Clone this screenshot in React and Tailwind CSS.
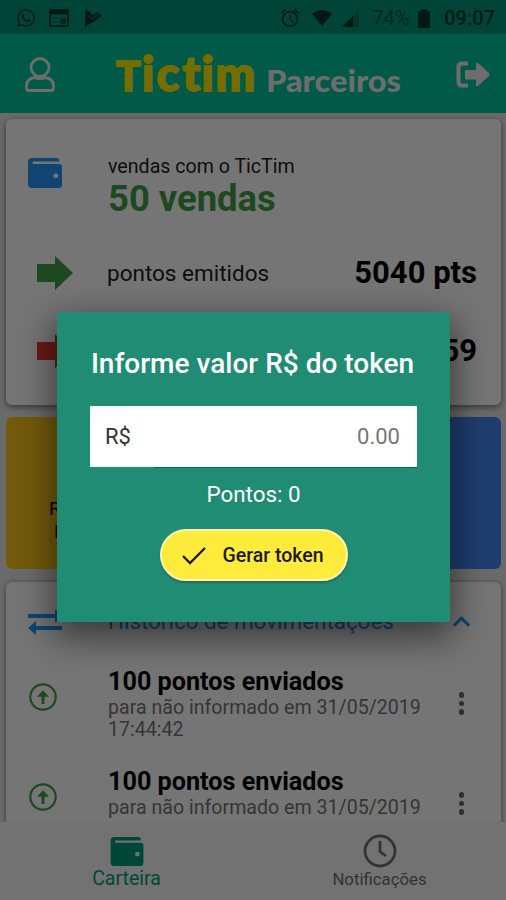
import { ChevronUp } from 'lucide-react';
import { FaWhatsapp } from 'react-icons/fa';
import { MdAlarm } from 'react-icons/md';

const movements = [
  { id: 1, title: '100 pontos enviados', detail: 'para não informado em 31/05/2019', time: '17:44:42' },
  { id: 2, title: '100 pontos enviados', detail: 'para não informado em 31/05/2019' },
];

const WalletIcon = ({ className }) => (
  <svg viewBox="0 0 34 30" className={className} fill="currentColor">
    <path
      fillRule="evenodd"
      d="M4 0H29.500Q31.500 .5 31.500 3.500H5Q3.800 4.500 5 6H31Q34 6 34 9V27Q34 30 31 30H4Q0 30 0 26V4Q0 0 4 0ZM26.500 15.500a1.500 1.500 0 0 0-1 1.500v1.500a1.500 1.500 0 0 0 1.500 1.500h1.500a1.500 1.500 0 0 0 1.500-1.500v-1.500a1.500 1.500 0 0 0-1.500-1.500Z"
    />
  </svg>
);

const ArrowIcon = ({ className }) => (
  <svg viewBox="0 0 36 34" className={className} fill="currentColor">
    <path d="M0 8H18V0L36 17L18 34V26H0Z" />
  </svg>
);

const StatusBar = () => (
  <div className="h-[34px] shrink-0 bg-[#00947a] flex items-center justify-between pl-4 pt-[2px] pr-[11px] text-[#00382e]">
    <div className="flex items-center gap-[13px]">
      <FaWhatsapp className="w-5 h-5" />
      <svg viewBox="0 0 20 18" className="w-5 h-[18px]" fill="none" stroke="currentColor" strokeWidth="1.800">
        <rect x="1" y="1" width="18" height="16" rx="1" />
        <path d="M1 3.500H19" strokeWidth="4" />
        <path d="M4 9H9M4 13H9" strokeWidth="1" opacity=".6" />
        <path d="M11 9H17V15H11Z" fill="currentColor" stroke="none" opacity=".6" />
      </svg>
      <svg viewBox="0 0 19 18" className="w-[19px] h-[18px] ml-[2px]" fill="currentColor">
        <path d="M1 0L6 3L8 6L14 3L18 7L1 18Z" />
        <path d="M5 7L8 10L15 4" fill="none" stroke="#00947a" strokeWidth="1" />
      </svg>
    </div>
    <div className="flex items-center font-['Roboto',sans-serif] text-[20px]">
      <MdAlarm className="w-[22px] h-[22px] mr-[11px]" />
      <svg viewBox="0 0 20 16" className="w-5 h-4 mr-[10px]" fill="currentColor">
        <path d="M0 4Q10 -4 20 4L10 16Z" />
      </svg>
      <svg viewBox="0 0 17 17" className="w-[17px] h-[17px] mr-[13px]" fill="currentColor">
        <path d="M0 17L17 0V17Z" opacity=".35" />
        <path d="M0 17L11 6V17Z" />
      </svg>
      <span className="w-[37px] mr-[9px] opacity-70">74%</span>
      <svg viewBox="0 0 12 19" className="w-3 h-[19px] mr-[14px]" fill="currentColor">
        <path d="M3 0H9V2H12V19H0V2H3Z" />
      </svg>
      <span className="font-medium">09:07</span>
    </div>
  </div>
);

const Header = () => (
  <header className="h-[79px] shrink-0 bg-[#00c49b] flex items-center justify-between pl-[25px] pr-4 text-[#ededed]">
    <svg viewBox="0 0 30 35" className="w-[30px] h-[35px] mt-[2px]" fill="none" stroke="currentColor" strokeWidth="2.800">
      <circle cx="15" cy="10.500" r="9" />
      <path d="M10 20.500Q1.500 21.500 1.500 29V31Q1.500 33.500 4 33.500H26Q28.500 33.500 28.500 31V29Q28.500 21.500 20 20.500Q15 23 10 20.500Z" />
    </svg>
    <svg viewBox="0 0 290 70" className="w-[290px] h-[70px] ml-2" fontFamily="Lato, sans-serif" fontWeight="900" strokeLinejoin="round">
      <text y="51.500" fill="#ffee00" stroke="#ffee00" strokeWidth="1.800">
        <tspan x="1" fontSize="41">T</tspan>
        <tspan x="27 41.500 67.500 86.500 100.500" fontSize="47">ictim</tspan>
      </text>
      <text x="151" y="52.500" fontSize="30" textLength="135" lengthAdjust="spacingAndGlyphs" fill="#ededed">
        Parceiros
      </text>
    </svg>
    <svg viewBox="0 0 34 27" className="w-[34px] h-[27px] mt-px">
      <path d="M12 2.500H6Q2.500 2.500 2.500 6V21Q2.500 24.500 6 24.500H12" fill="none" stroke="currentColor" strokeWidth="4" />
      <path d="M10 9H20V3Q20 .5 22 2L33 12Q34 13.500 33 15L22 25Q20 26 20 24V18.500H10Q9 18.500 9 17.500V10Q9 9 10 9Z" fill="currentColor" />
    </svg>
  </header>
);

const SummaryCard = () => (
  <section className="h-[286px] shrink-0 rounded-md bg-white shadow-[0_2px_6px_rgba(0,0,0,0.5)] text-black">
    <div className="flex pt-[36px] pl-[22px]">
      <WalletIcon className="w-[34px] h-[30px] mt-[3px] mr-[46px] text-[#2196f3]" />
      <div>
        <p className="text-[19.600px] leading-[23px] text-[#222222]">vendas com o TicTim</p>
        <p className="text-[36.400px] leading-[42px] font-bold text-[#43a047]">50 vendas</p>
      </div>
    </div>
    <div className="flex items-center h-[78px] mt-[14px] pl-[31px] pr-[24px]">
      <ArrowIcon className="w-9 h-[34px] mr-[34px] text-[#43a047]" />
      <span className="grow pt-[2px] text-[22.500px] text-[#222222]">pontos emitidos</span>
      <span className="text-[31px] font-bold">5040 pts</span>
    </div>
    <div className="flex items-center justify-between h-[78px] pl-[31px] pr-[24px]">
      <ArrowIcon className="w-9 h-[34px] text-[#e53935]" />
      <span className="text-[31px] font-bold">59</span>
    </div>
  </section>
);

const History = () => (
  <section className="h-[300px] shrink-0 rounded-md bg-white shadow-[0_1px_5px_rgba(0,0,0,0.5)]">
    <div className="flex items-center h-[78px] pl-[22px] pr-[26px] text-[#2196f3]">
      <svg viewBox="0 0 34 26" className="w-[34px] h-[26px] mt-[2px] mr-[46px]" fill="currentColor">
        <path d="M0 5H27V0L34 7L27 14V9H0ZM34 17H8V12L0 19L8 26V21H34Z" />
      </svg>
      <span className="grow pt-[2px] text-[22.400px]">Histórico de movimentações</span>
      <ChevronUp className="w-[27px] h-[27px]" strokeWidth={2.7} />
    </div>
    {movements.map((m) => (
      <div key={m.id} className="flex h-[100px] pl-[23px] pr-[37px]">
        <svg viewBox="0 0 28 28" className="w-7 h-7 mt-[23px] mr-[51px] text-[#43a047]" fill="none" stroke="currentColor">
          <circle cx="14" cy="14" r="12.700" strokeWidth="2.200" />
          <path d="M14 21V9" strokeWidth="3" />
          <path d="M8.500 13.500L14 7.500L19.500 13.500Z" fill="currentColor" strokeWidth=".5" />
        </svg>
        <div className="w-[330px]">
          <p className="pt-[7px] text-[25.200px] leading-[30px] font-bold text-black">{m.title}</p>
          <p className="text-[19.600px] leading-[22px] text-[#757575]">{m.detail}</p>
          {m.time && <p className="text-[19.600px] leading-[22px] text-[#757575]">{m.time}</p>}
        </div>
        <div className="ml-auto mt-[32px] flex flex-col gap-[3px]">
          <i className="w-[5.500px] h-[5.500px] rounded-full bg-[#666666]" />
          <i className="w-[5.500px] h-[5.500px] rounded-full bg-[#666666]" />
          <i className="w-[5.500px] h-[5.500px] rounded-full bg-[#666666]" />
        </div>
      </div>
    ))}
  </section>
);

const BottomNav = () => (
  <nav className="h-[78px] shrink-0 relative flex bg-[#f8f8f8]">
    <div className="w-1/2 flex flex-col items-center pt-[15px] text-[#009b78]">
      <WalletIcon className="w-[34px] h-[29px]" />
      <span className="mt-px text-[19.500px] leading-[23px]">Carteira</span>
    </div>
    <div className="w-1/2 flex flex-col items-center pt-[12px] text-[#707070]">
      <svg viewBox="0 0 34 34" className="w-[34px] h-[34px]" fill="none" stroke="currentColor" strokeWidth="2.800">
        <circle cx="17" cy="17" r="15" />
        <path d="M17 7V17.500L23 22" />
      </svg>
      <span className="text-[16.800px] leading-[22px]">Notificações</span>
    </div>
  </nav>
);

const TokenDialog = () => (
  <div className="absolute inset-0 bg-black/54">
    <div className="ml-[57px] mt-[312px] w-[393px] h-[310px] rounded-[2px] bg-[#208c73] shadow-[0_12px_34px_4px_rgba(0,0,0,0.5)] flex flex-col items-center px-[33px] text-white">
      <h2 className="mt-[36px] mr-[2px] text-[28px] leading-[32px] font-medium whitespace-nowrap">Informe valor R$ do token</h2>
      <div className="mt-[26px] w-[327px] h-[61px] shrink-0 bg-white flex items-center justify-between pl-[15px] pr-[17px] text-[22px]">
        <span className="text-[#333333]">R$</span>
        <span className="text-[#777777]">0.00</span>
      </div>
      <div className="self-end w-[263px] h-px bg-[#006b52]" />
      <p className="mt-[13px] text-[22.400px] leading-[26px]">Pontos: 0</p>
      <button className="mt-[22px] w-[188px] h-[52px] rounded-full border-2 border-[#fff7b0] bg-[#ffeb3b] shadow-[0_2px_2px_rgba(0,0,0,0.2)] flex items-center pl-[20px] text-[#1a1a1a]">
        <svg viewBox="0 0 24 18" className="w-6 h-[18px] mt-px mr-[17px]" fill="none" stroke="currentColor" strokeWidth="2.300">
          <path d="M1 9L8 16L23 1" />
        </svg>
        <span className="pt-[2px] text-[19.500px] font-medium whitespace-nowrap">Gerar token</span>
      </button>
    </div>
  </div>
);

const App = () => (
  <div className="relative w-[506px] h-[900px] overflow-hidden flex flex-col bg-[#e8e8e8] font-['Roboto',sans-serif]">
    <StatusBar />
    <Header />
    <main className="h-[709px] shrink-0 overflow-hidden flex flex-col pt-[6px] pl-[6px] pr-[5px]">
      <SummaryCard />
      <div className="flex justify-between h-[152px] shrink-0 mt-[12px] mb-[13px] text-[19px] leading-[23px]">
        <div className="w-[160px] rounded-md bg-[#fbc51b] pt-[80px] pl-[43px]">
          <p>Receber</p>
          <p className="pl-[5px]">Pontos</p>
        </div>
        <div className="w-[160px] rounded-md bg-[#4285f4]" />
      </div>
      <History />
    </main>
    <BottomNav />
    <TokenDialog />
  </div>
);

export default App;
